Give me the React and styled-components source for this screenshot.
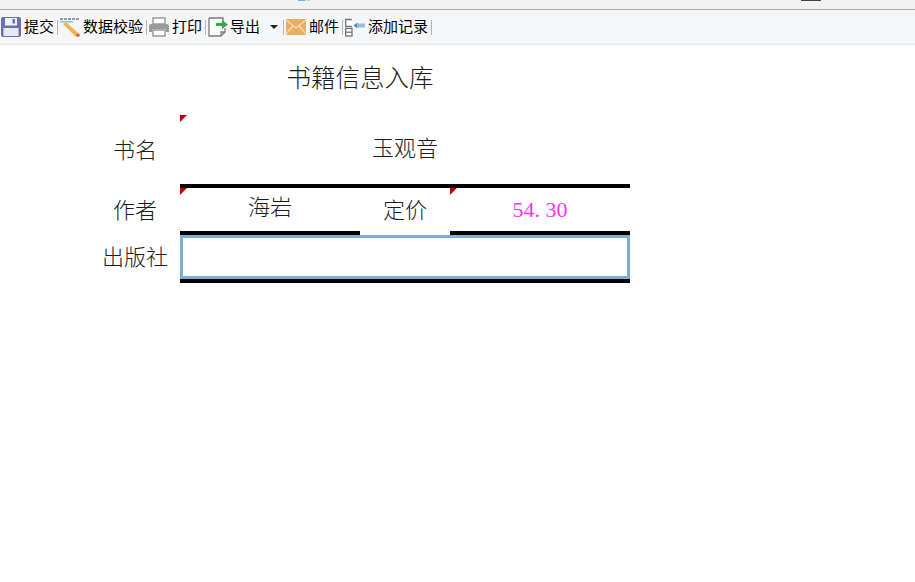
import styled, { createGlobalStyle } from "styled-components";

const GlobalStyle = createGlobalStyle`
	html, body {
		margin: 0;
		padding: 0;
		background: #fff;
		font-family: "Noto Sans CJK SC", "Liberation Sans", sans-serif;
	}
`;

const TopStrip = styled.div`
	position: relative;
	height: 9px;
	background: #f2f2f2;
	border-bottom: 1px solid #aaaaaa;
`;

const Remnant = styled.span`
	position: absolute;
	top: 0;
	left: ${(p) => p.$left}px;
	width: ${(p) => p.$width}px;
	height: 1px;
	background: ${(p) => p.$color};
`;

const Toolbar = styled.div`
	height: 35px;
	box-sizing: border-box;
	display: flex;
	align-items: center;
	padding-left: 1px;
	background: #f5f6f8;
	border-bottom: 1px solid #e6e7ea;
`;

const ToolButton = styled.div`
	display: flex;
	align-items: center;
	gap: ${(p) => p.$gap || 3}px;
	font-size: 15px;
	color: #000;
	line-height: 20px;
	white-space: nowrap;
	svg {
		display: block;
		width: 20px;
		height: 20px;
		flex: none;
	}
`;

const ToolLabel = styled.span`
	padding-bottom: 3px;
`;

const Caret = styled.span`
	width: 0;
	height: 0;
	margin: 0 2px 0 8px;
	border-left: 4px solid transparent;
	border-right: 4px solid transparent;
	border-top: 4px solid #222;
`;

const Divider = styled.span`
	width: 1px;
	height: 15px;
	margin: 0 2px 0 3px;
	background: #b5b5b5;
`;

const Form = styled.div`
	display: grid;
	width: 540px;
	margin-left: 90px;
	grid-template-columns: 90px 180px 90px 180px;
	grid-template-rows: 70px 73px 47px 48px;
	color: #1c1c1c;
	font-size: 22px;
	font-weight: 300;
`;

const Cell = styled.div`
	position: relative;
	display: flex;
	align-items: center;
	justify-content: center;
	box-sizing: border-box;
	grid-column: span ${(p) => p.$span || 1};
	padding-bottom: ${(p) => p.$lift || 0}px;
	border-bottom: ${(p) => (p.$rule ? "4px solid #000" : "none")};
`;

const Title = styled(Cell)`
	font-size: 24.5px;
`;

const PriceCell = styled(Cell)`
	color: #ff33ee;
	font-family: "Liberation Serif", serif;
	font-weight: 400;
`;

const PriceDot = styled.span`
	margin-right: 5.5px;
`;

const Corner = styled.i`
	position: absolute;
	top: 0;
	left: 0;
	width: 0;
	height: 0;
	border-top: 7px solid #c00000;
	border-right: 7px solid transparent;
`;

const PublisherInput = styled.div`
	width: 100%;
	height: 100%;
	box-sizing: border-box;
	border: 3px solid #7cadd9;
	background: #fff;
`;

const SaveIcon = () => (
	<svg viewBox="0 0 20 20">
		<rect x="0" y="0" width="20" height="20" rx="2" fill="#6b70b4" />
		<rect x="4" y="1" width="12" height="7.500" fill="#f3f3fa" />
		<rect x="11.500" y="2" width="2.500" height="4.500" fill="#6b70b4" />
		<rect x="2.500" y="11" width="15" height="8" fill="#e9e9f4" />
	</svg>
);

const PencilIcon = () => (
	<svg viewBox="0 0 20 20">
		<path d="M0 1h3v2H0zM4 1h3v2H4zM8 1h3v2H8zM12 1h3v2h-3zM16 1h3v2h-3z" fill="#9a9a9a" />
		<rect x="0" y="4" width="13" height="1.500" fill="#7fc4ee" />
		<path d="M3 7l3-2 12 11-3 3z" fill="#f0b64a" />
		<path d="M15 19l3-3 2 2-1 2z" fill="#e2574c" />
	</svg>
);

const PrintIcon = () => (
	<svg viewBox="0 0 20 20">
		<rect x="4" y="1" width="12" height="6" fill="#fff" stroke="#9b9b9b" strokeWidth="1.500" />
		<path d="M2 7h16a2 2 0 0 1 2 2v6h-3v-3H3v3H0V9a2 2 0 0 1 2-2z" fill="#9b9b9b" />
		<rect x="4" y="13" width="12" height="6" fill="#fff" stroke="#9b9b9b" strokeWidth="1.500" />
	</svg>
);

const ExportIcon = () => (
	<svg viewBox="0 0 20 20">
		<path d="M1 1h14v4M1 1v18h12l4-4v-4M13 19v-4h4" fill="#fff" stroke="#7a7a7a" strokeWidth="1.300" />
		<path d="M8 6h6V3l6 4.500-6 4.500V9H8z" fill="#35a84a" />
	</svg>
);

const MailIcon = () => (
	<svg viewBox="0 0 20 20">
		<rect x="0" y="2" width="20" height="16" rx="1" fill="#e9ae62" />
		<path d="M0 3l10 8 10-8M0 17l7-8M20 17l-7-8" fill="none" stroke="#f8dcb2" strokeWidth="1.200" />
	</svg>
);

const AddRecordIcon = () => (
	<svg viewBox="0 0 20 20">
		<path d="M7 2.500H0.700V9.500H7" fill="#fff" stroke="#777" strokeWidth="1.300" />
		<rect x="0.700" y="11.500" width="6.300" height="7.500" fill="#fff" stroke="#777" strokeWidth="1.300" />
		<path d="M0.700 15.200H7" stroke="#777" strokeWidth="1.300" />
		<path d="M8.500 8.500l4-3v6z" fill="#3f8fd6" />
		<rect x="12.500" y="6.500" width="7.500" height="4" fill="#9fb9cf" />
	</svg>
);

export default function App() {
	return (
		<>
			<GlobalStyle />
			<TopStrip>
				<Remnant $left={298} $width={7} $color="#6db3ea" />
				<Remnant $left={306} $width={4} $color="#a5def0" />
				<Remnant $left={801} $width={20} $color="#444" />
			</TopStrip>
			<Toolbar>
				<ToolButton>
					<SaveIcon />
					<ToolLabel>提交</ToolLabel>
				</ToolButton>
				<Divider />
				<ToolButton>
					<PencilIcon />
					<ToolLabel>数据校验</ToolLabel>
				</ToolButton>
				<Divider />
				<ToolButton>
					<PrintIcon />
					<ToolLabel>打印</ToolLabel>
				</ToolButton>
				<Divider />
				<ToolButton $gap={2}>
					<ExportIcon />
					<ToolLabel>导出</ToolLabel>
					<Caret />
				</ToolButton>
				<Divider />
				<ToolButton>
					<MailIcon />
					<ToolLabel>邮件</ToolLabel>
				</ToolButton>
				<Divider />
				<ToolButton>
					<AddRecordIcon />
					<ToolLabel>添加记录</ToolLabel>
				</ToolButton>
				<Divider />
			</Toolbar>
			<Form>
				<Title $span={4} $lift={8}>
					书籍信息入库
				</Title>
				<Cell $lift={7}>书名</Cell>
				<Cell $span={3} $rule $lift={7}>
					<Corner />
					玉观音
				</Cell>
				<Cell $lift={7}>作者</Cell>
				<Cell $rule $lift={9}>
					<Corner />
					海岩
				</Cell>
				<Cell $lift={7}>定价</Cell>
				<PriceCell $rule>
					<Corner />
					54<PriceDot>.</PriceDot>30
				</PriceCell>
				<Cell $lift={8}>出版社</Cell>
				<Cell $span={3} $rule>
					<PublisherInput />
				</Cell>
			</Form>
		</>
	);
}
